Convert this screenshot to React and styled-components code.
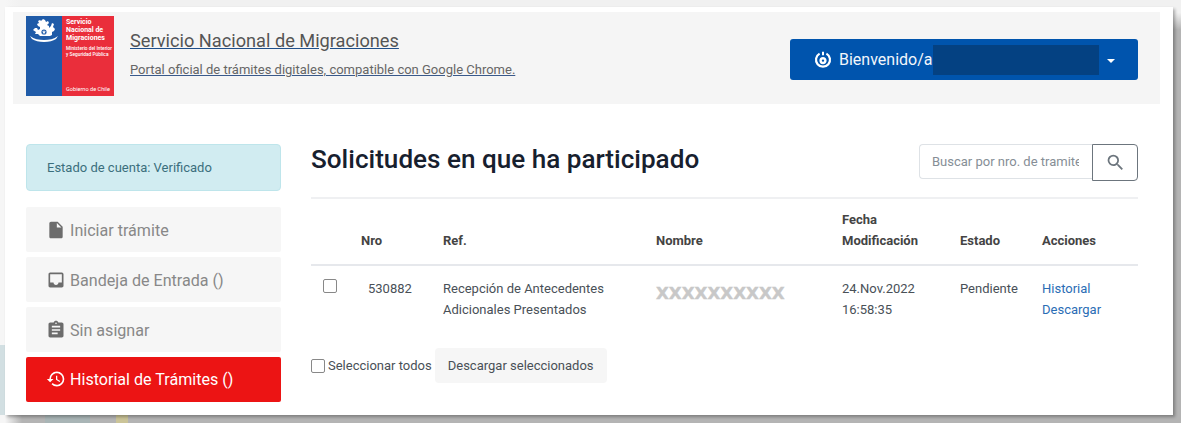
import styled, { createGlobalStyle } from "styled-components";
import { MdInsertDriveFile, MdInbox, MdAssignment, MdHistory, MdSearch } from "react-icons/md";

const GlobalStyle = createGlobalStyle`
    html, body {
        margin: 0;
        padding: 0;
        overflow: hidden;
    }

    body {
        font-family: Roboto, "Liberation Sans", sans-serif;
        color: #212529;
    }
`

const columns = "50px 82px 213px 186px 118px 82px 96px";

export default function App() {

    return (
        <Page>
            <GlobalStyle />
            <Card>
                <Header>
                    <Brand>
                        <Logo>
                            <LogoBlue>
                                <svg width="30" height="24" viewBox="0 0 30 24" fill="#fff">
                                    <path d="M9 2l2-1 1 1 2-2 2 1 1 2 2-1 1 2-2 2 2 1 0 2 2-2 1-3 2 1-1 3 2 2-1 2-2 1 0 3-2 1-10 0-2-2-3 0 1-2-3-2 2-2 2 0 1 2 2-1 0-2-2-1-1-2 2-1z" />
                                    <path d="M1 17c4 3 9 4 14 4s10-1 14-4l-2 3c-3 2-7 3-12 3s-9-1-12-3z" />
                                    <circle cx="15" cy="13" r="2.6" fill="#1f5ba8" />
                                    <path d="M15 11l.6 1.5h1.4l-1.2 1 .5 1.5-1.3-.9-1.3.9.5-1.5-1.2-1h1.4z" />
                                </svg>
                            </LogoBlue>
                            <LogoRed>
                                <LogoName>Servicio<br />Nacional de<br />Migraciones</LogoName>
                                <LogoMinistry>Ministerio del Interior<br />y Seguridad Pública</LogoMinistry>
                                <LogoFooter>Gobierno de Chile</LogoFooter>
                            </LogoRed>
                        </Logo>
                        <BrandText>
                            <BrandTitle>Servicio Nacional de Migraciones</BrandTitle>
                            <BrandSubtitle>Portal oficial de trámites digitales, compatible con Google Chrome.</BrandSubtitle>
                        </BrandText>
                    </Brand>
                    <UserButton>
                        <svg width="18" height="18" viewBox="0 0 18 18" fill="none" stroke="#fff">
                            <path d="M5.6 2.6a7 7 0 1 0 6.8 0" strokeWidth="2.2" />
                            <path d="M9 .8v3.4" strokeWidth="2" />
                            <circle cx="9" cy="9.6" r="2.4" strokeWidth="2.4" />
                        </svg>
                        <UserLabel>Bienvenido/a</UserLabel>
                        <UserMask />
                        <Caret />
                    </UserButton>
                </Header>

                <Content>
                    <Sidebar>
                        <AccountStatus>Estado de cuenta: Verificado</AccountStatus>
                        <Menu>
                            <MenuItem><MdInsertDriveFile size={20} />Iniciar trámite</MenuItem>
                            <MenuItem><MdInbox size={20} />Bandeja de Entrada ()</MenuItem>
                            <MenuItem><MdAssignment size={20} />Sin asignar</MenuItem>
                            <MenuItem $active><MdHistory size={20} />Historial de Trámites ()</MenuItem>
                        </Menu>
                    </Sidebar>

                    <Main>
                        <TitleRow>
                            <Title>Solicitudes en que ha participado</Title>
                            <Search>
                                <SearchInput placeholder="Buscar por nro. de tramite" />
                                <SearchButton><MdSearch size={21} /></SearchButton>
                            </Search>
                        </TitleRow>

                        <TableHead>
                            <span />
                            <HeadCell>Nro</HeadCell>
                            <HeadCell>Ref.</HeadCell>
                            <HeadCell>Nombre</HeadCell>
                            <HeadCell>Fecha<br />Modificación</HeadCell>
                            <HeadCell>Estado</HeadCell>
                            <HeadCell>Acciones</HeadCell>
                        </TableHead>

                        <TableRow>
                            <RowCheck><CheckBox type="checkbox" /></RowCheck>
                            <NumberCell>530882</NumberCell>
                            <Cell>Recepción de Antecedentes<br />Adicionales Presentados</Cell>
                            <MaskedName>XXXXXXXXXX</MaskedName>
                            <Cell>24.Nov.2022<br />16:58:35</Cell>
                            <Cell>Pendiente</Cell>
                            <Cell>
                                <ActionLink>Historial</ActionLink><br />
                                <ActionLink>Descargar</ActionLink>
                            </Cell>
                        </TableRow>

                        <Footer>
                            <SelectAll>
                                <CheckBox type="checkbox" />
                                Seleccionar todos
                            </SelectAll>
                            <DownloadButton>Descargar seleccionados</DownloadButton>
                        </Footer>
                    </Main>
                </Content>
            </Card>
        </Page>
    );
}

const Page = styled.div`
    box-sizing: border-box;
    width: 1181px;
    height: 423px;
    padding: 7px 8px 8px 5px;
    background:
        linear-gradient(#d2dfe2, #d2dfe2) 0 345px / 5px 70px no-repeat,
        linear-gradient(#cbc498, #cbc498) 116px 415px / 12px 8px no-repeat,
        linear-gradient(#a9b5b6, #a9b5b6) 45px 415px / 45px 8px no-repeat,
        linear-gradient(90deg, #f6f6f6 5px, rgba(246, 246, 246, 0) 22px),
        linear-gradient(#f1f1f1, #f1f1f1 3%, #b4b4b4 7%);
`
const Card = styled.div`
    box-sizing: border-box;
    height: 408px;
    padding: 5px 13px 0 8px;
    background-color: #fff;
    box-shadow: 2px 2px 3px rgba(0, 0, 0, 0.3);
`
const Header = styled.header`
    display: flex;
    justify-content: space-between;
    align-items: flex-start;
    height: 92px;
    padding: 0 22px 0 13px;
    box-sizing: border-box;
    background-color: #f5f5f5;
`
const Brand = styled.div`
    display: flex;
    gap: 16px;
    height: 100%;
    padding-top: 4px;
    box-sizing: border-box;
`
const Logo = styled.div`
    display: flex;
    width: 88px;
    height: 80px;
`
const LogoBlue = styled.div`
    display: flex;
    justify-content: center;
    width: 36px;
    padding-top: 3px;
    box-sizing: border-box;
    background-color: #1f5ba8;
`
const LogoRed = styled.div`
    display: flex;
    flex-direction: column;
    flex: 1;
    padding: 2px 0 3px 4px;
    box-sizing: border-box;
    background-color: #ea2e3b;
    color: #fff;
`
const LogoName = styled.div`
    font-size: 7px;
    font-weight: 700;
    line-height: 8px;
`
const LogoMinistry = styled.div`
    margin-top: 4px;
    font-size: 4.8px;
    font-weight: 500;
    line-height: 6px;
    white-space: nowrap;
`
const LogoFooter = styled.div`
    margin-top: auto;
    font-size: 5.6px;
    line-height: 7px;
    white-space: nowrap;
`
const BrandText = styled.div`
    padding-top: 14px;
`
const BrandTitle = styled.div`
    font-size: 18.2px;
    line-height: 22px;
    color: #555;
    text-decoration: underline;
    text-decoration-color: #1f4f8a;
`
const BrandSubtitle = styled.div`
    margin-top: 10px;
    font-size: 13px;
    line-height: 16px;
    color: #666;
    text-decoration: underline;
    text-decoration-color: #39598a;
`
const UserButton = styled.div`
    display: flex;
    align-items: center;
    width: 348px;
    height: 41px;
    margin-top: 27px;
    padding: 0 23px 0 24px;
    box-sizing: border-box;
    border-radius: 3px;
    background-color: #0054ad;
    color: #f2f6fb;
`
const UserLabel = styled.span`
    margin-left: 7px;
    font-size: 16px;
    line-height: 41px;
`
const UserMask = styled.span`
    width: 166px;
    height: 30px;
    background-color: #044182;
`
const Caret = styled.span`
    margin: 3px 0 0 8px;
    border-top: 4.5px solid #fff;
    border-left: 4.5px solid transparent;
    border-right: 4.5px solid transparent;
`
const Content = styled.div`
    display: flex;
    gap: 30px;
    padding: 40px 22px 0 13px;
`
const Sidebar = styled.aside`
    display: flex;
    flex-direction: column;
    gap: 16px;
    width: 255px;
    flex-shrink: 0;
`
const AccountStatus = styled.div`
    height: 47px;
    padding-left: 20px;
    box-sizing: border-box;
    border: 1px solid #bee5eb;
    border-radius: 4px;
    background-color: #d1ecf1;
    color: #3b6f7d;
    font-size: 13px;
    line-height: 45px;
`
const Menu = styled.nav`
    display: flex;
    flex-direction: column;
    gap: 5.5px;
`
const MenuItem = styled.div`
    display: flex;
    align-items: center;
    gap: 4px;
    height: 44.5px;
    padding: ${(props) => (props.$active ? "0" : "2px")} 0 0 20px;
    box-sizing: border-box;
    border-radius: 2px;
    background-color: ${(props) => (props.$active ? "#ec1414" : "#f6f6f6")};
    color: ${(props) => (props.$active ? "#fff" : "#888")};
    font-size: 16.1px;

    svg {
        color: ${(props) => (props.$active ? "#fff" : "#6c6c6c")};
        flex-shrink: 0;
    }
`
const Main = styled.main`
    flex: 1;
    min-width: 0;
`
const TitleRow = styled.div`
    display: flex;
    justify-content: space-between;
    align-items: flex-start;
    height: 55px;
    box-sizing: border-box;
    border-bottom: 2px solid #eff0f2;
`
const Title = styled.h1`
    margin: 0;
    font-size: 26.1px;
    font-weight: 500;
    line-height: 30px;
    color: #17202e;
`
const Search = styled.div`
    display: flex;
    height: 37px;
`
const SearchInput = styled.input`
    width: 173px;
    height: 35px;
    padding: 0 13px 0 12px;
    box-sizing: border-box;
    border: 1px solid #dee2e6;
    border-right: 0;
    border-radius: 4px 0 0 4px;
    outline: none;
    font-family: inherit;
    font-size: 13px;
    color: #495057;

    &::placeholder {
        color: #868e96;
        opacity: 1;
    }
`
const SearchButton = styled.div`
    display: flex;
    align-items: center;
    justify-content: center;
    width: 46px;
    box-sizing: border-box;
    border: 1px solid #6c757d;
    border-radius: 0 4px 4px 0;
    color: #6c757d;
`
const TableHead = styled.div`
    display: grid;
    grid-template-columns: ${columns};
    align-items: end;
    height: 67px;
    padding-bottom: 13px;
    box-sizing: border-box;
    border-bottom: 2px solid #e6e8ec;
`
const HeadCell = styled.div`
    font-size: 13px;
    font-weight: 700;
    line-height: 21px;
    color: #444;
`
const TableRow = styled.div`
    display: grid;
    grid-template-columns: ${columns};
    align-items: start;
    height: 82px;
    padding-top: 12px;
    box-sizing: border-box;
`
const RowCheck = styled.div`
    padding: 1px 0 0 12px;
    line-height: 0;
`
const CheckBox = styled.input`
    appearance: none;
    width: 14px;
    height: 14px;
    margin: 0;
    box-sizing: border-box;
    border: 1px solid #888;
    border-radius: 2px;
    background-color: #fff;
    flex-shrink: 0;
`
const Cell = styled.div`
    font-size: 13px;
    line-height: 21px;
    color: #495057;
`
const NumberCell = styled(Cell)`
    padding-left: 7px;
`
const MaskedName = styled.div`
    padding-top: 5px;
    font-family: "DejaVu Sans", sans-serif;
    font-size: 16.7px;
    font-weight: 700;
    line-height: 21px;
    color: #c8c8c8;
    -webkit-text-stroke: 0.4px #c8c8c8;
`
const ActionLink = styled.a`
    color: #2a6db5;
`
const Footer = styled.div`
    display: flex;
    align-items: center;
    gap: 3px;
`
const SelectAll = styled.label`
    display: flex;
    align-items: center;
    gap: 3px;
    font-size: 13px;
    color: #495057;
`
const DownloadButton = styled.div`
    height: 35px;
    padding: 0 13px;
    border-radius: 4px;
    background-color: #f6f6f6;
    font-size: 13px;
    line-height: 35px;
    color: #495057;
`
